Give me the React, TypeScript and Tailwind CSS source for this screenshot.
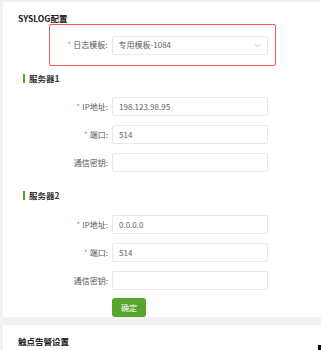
import React from 'react';

const FONT = { fontFamily: '"Noto Sans CJK SC", "Noto Sans", sans-serif' };

function Field({ label, value, required }: { label: string; value?: string; required?: boolean }) {
  return (
    <div className="flex items-center h-[19px]">
      <div className="w-[109px] pr-[4px] text-right text-[8px] text-[#555]">
        {required && <span className="text-[#f56c6c] mr-[2px]">*</span>}
        {label}
      </div>
      <div className="w-[156px] h-[19px] border border-[#e8e8e8] rounded-[2px] flex items-center px-[6px] text-[8px] text-[#606266]">
        {value}
      </div>
    </div>
  );
}

function SubTitle({ text }: { text: string }) {
  return (
    <div className="flex items-center gap-[4px] ml-[20px] h-[12px]">
      <span className="w-[2px] h-[9px] bg-[#52a82a]" />
      <span className="text-[8.5px] font-bold text-[#333]">{text}</span>
    </div>
  );
}

export default function App() {
  return (
    <div className="relative w-[321px] h-[350px] bg-[#f0f2f5] pt-[2px] pl-[3px] overflow-hidden" style={FONT}>
      <div className="bg-white h-[315px]">
        <div className="pt-[10px] pl-[15px] h-[22px] leading-[12px] text-[8.5px] font-bold text-[#222]">
          SYSLOG配置
        </div>

        <div className="ml-[46px] w-[227px] h-[42px] border-[1.5px] border-[#ff5457] rounded-[2px] flex items-center">
          <div className="w-[61.5px] pr-[4px] text-right text-[8px] text-[#555]">
            <span className="text-[#f56c6c] mr-[2px]">*</span>日志模板:
          </div>
          <div className="w-[156px] h-[19px] border border-[#e8e8e8] rounded-[2px] flex items-center justify-between px-[6px] text-[8px] text-[#606266]">
            <span>专用模板-1084</span>
            <svg width="7" height="5" viewBox="0 0 7 5" fill="none">
              <path d="M0.8 1 L3.5 3.8 L6.2 1" stroke="#c0c4cc" strokeWidth="0.9" />
            </svg>
          </div>
        </div>

        <div className="mt-[6px]">
          <SubTitle text="服务器1" />
        </div>
        <div className="mt-[13px] flex flex-col gap-[9px]">
          <Field label="IP地址:" value="198.123.98.95" required />
          <Field label="端口:" value="514" required />
          <Field label="通信密钥:" />
        </div>

        <div className="mt-[17px]">
          <SubTitle text="服务器2" />
        </div>
        <div className="mt-[14px] flex flex-col gap-[9px]">
          <Field label="IP地址:" value="0.0.0.0" required />
          <Field label="端口:" value="514" required />
          <Field label="通信密钥:" />
        </div>

        <div className="mt-[8px] ml-[109px]">
          <button className="w-[34px] h-[19px] rounded-[3px] bg-[#57a52e] text-white text-[8px] flex items-center justify-center">
            确定
          </button>
        </div>
      </div>

      <div className="mt-[8px] bg-white h-[40px]">
        <div className="pt-[10px] pl-[15px] leading-[12px] text-[8.5px] font-bold text-[#222]">
          触点告警设置
        </div>
      </div>

      <div className="absolute left-[318px] top-[345px] w-[3px] h-[5px] bg-black" />
    </div>
  );
}
